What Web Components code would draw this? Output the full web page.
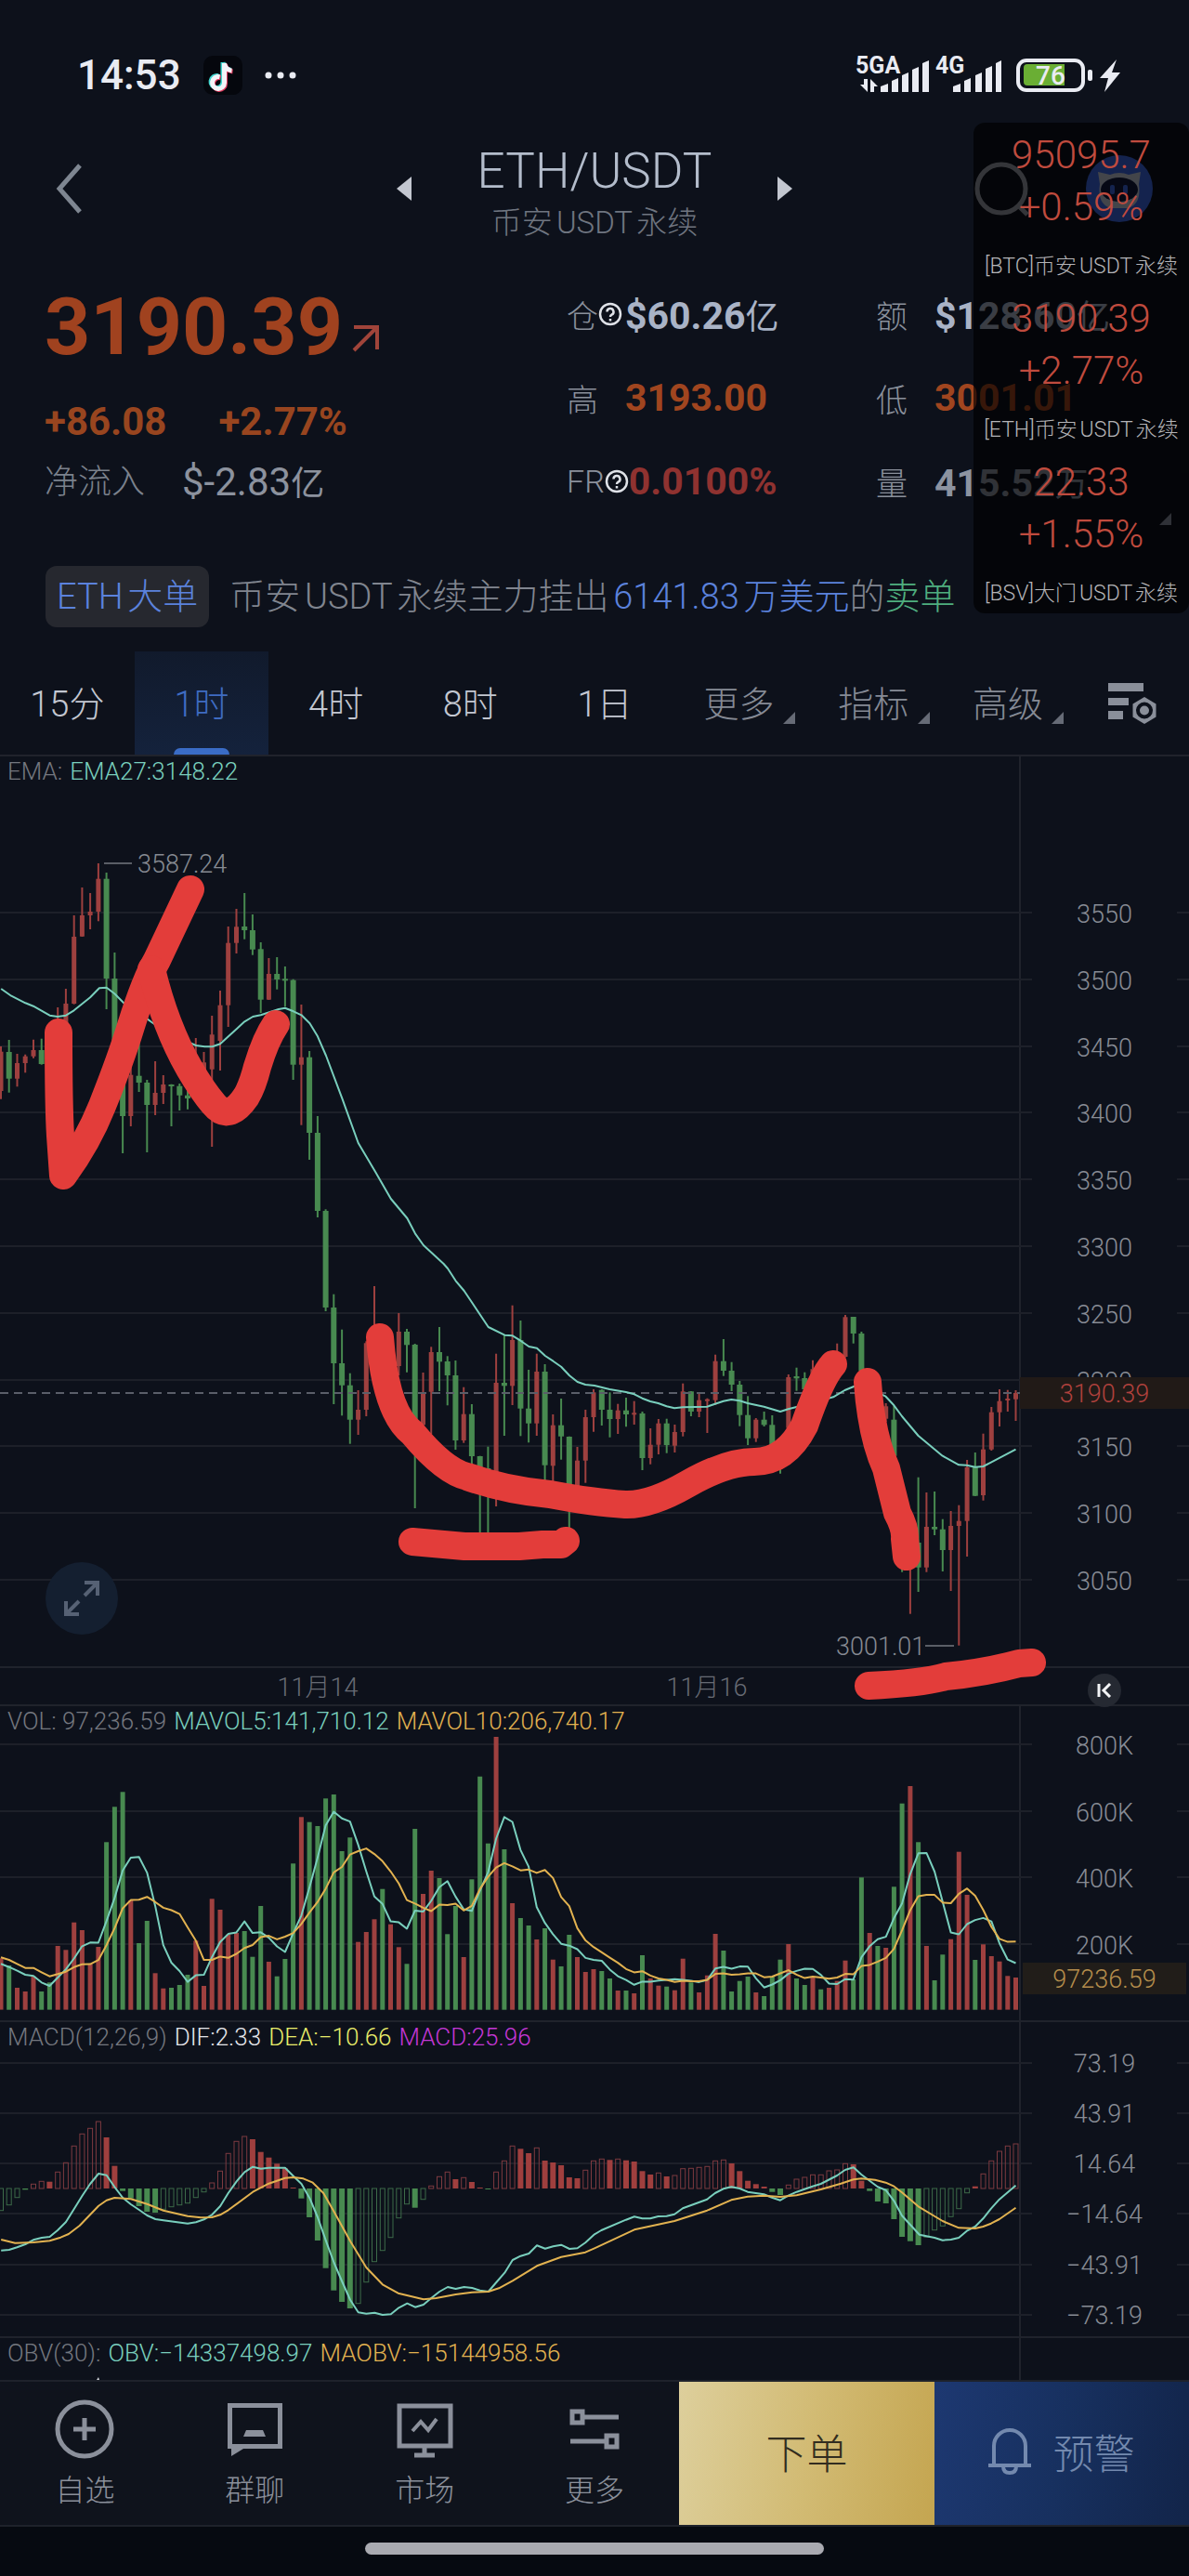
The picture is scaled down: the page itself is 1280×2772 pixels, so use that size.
<!DOCTYPE html>
<html lang="zh-CN">
<head>
<meta charset="utf-8">
<meta name="viewport" content="width=device-width, initial-scale=1">
<title>ETH/USDT</title>
<style>
  html { background: #060a11; }
  body { margin: 0; background: #0d111b; color: #a7adba; font-family: Roboto, "Noto Sans CJK SC", sans-serif; text-autospace: normal; }
</style>
</head>
<body>
<trade-page></trade-page>
<script>
const BASE = `
  *, *::before, *::after { box-sizing: border-box; }
  :host { display: block; }
  svg { display: block; }
  button { font: inherit; color: inherit; background: none; border: 0; padding: 0; margin: 0; cursor: pointer; text-autospace: inherit; }
  a { color: inherit; text-decoration: none; }
`;
function define(name, css, html) {
  customElements.define(name, class extends HTMLElement {
    constructor() {
      super();
      const t = document.createElement('template');
      t.innerHTML = `<style>${BASE}${css}</style>${typeof html === 'function' ? html(this) : html}`;
      this.attachShadow({ mode: 'open' }).append(t.content.cloneNode(true));
    }
  });
}

/* ---------- status bar ---------- */
define('status-bar', `
  :host { display: flex; align-items: center; justify-content: space-between; padding: 56px 72px 26px 83px; color: #e9ebf2; }
  .left { display: flex; align-items: center; gap: 24px; height: 50px; }
  time { font-size: 44px; line-height: 50px; font-weight: 500; }
  .right { overflow: visible; }
  text { font-family: Roboto, sans-serif; fill: #e9ebf2; }
`, `
  <div class="left">
    <time>14:53</time>
    <svg width="42" height="42" viewBox="0 0 42 42" aria-hidden="true">
      <rect width="42" height="42" rx="10" fill="#05070d"/>
      <g fill="none" stroke-width="5">
        <path stroke="#3fd6cf" d="M21 7v21a6.500 6.500 0 1 1-5-6.300M21 7c.6 5 3.500 7.500 8 8"/>
        <path stroke="#e23a5e" d="M23.500 9v21a6.500 6.500 0 1 1-5-6.300M23.500 9c.6 5 3.500 7.500 8 8"/>
        <path stroke="#f3f4f8" d="M22.500 8v21a6.500 6.500 0 1 1-5-6.300M22.500 8c.6 5 3.500 7.500 8 8"/>
      </g>
    </svg>
    <svg width="34" height="8" viewBox="0 0 34 8" fill="#e9ebf2"><circle cx="4" cy="4" r="3.500"/><circle cx="17" cy="4" r="3.500"/><circle cx="30" cy="4" r="3.500"/></svg>
  </div>
  <svg class="right" width="288" height="50" viewBox="920 56 288 50" aria-hidden="true">
    <text x="921" y="79" font-size="25" font-weight="700">5GA</text>
    <text x="1007" y="79" font-size="25" font-weight="700">4G</text>
    <g fill="#e9ebf2">
      <path d="M930 85h4v14l-8-8h4zM937 99V85l8 8h-4v6z"/>
      <path d="M948 93l8-3v9h-8zM960 87l7-3v15h-7zM971 81l7-3v21h-7zM982 75l7-3v27h-7zM993 68l7-3v34h-7z"/>
      <path d="M1026 93l8-3v9h-8zM1038 87l7-3v15h-7zM1050 81l7-3v21h-7zM1061 74l7-3v28h-7zM1072 68l6-3v34h-6z"/>
      <rect x="1171" y="75" width="5" height="12" rx="2"/>
      <path d="M1202 64l-18 20h9l-4 15 17-21h-9z"/>
    </g>
    <rect x="1096" y="65" width="70" height="32" rx="9" fill="none" stroke="#e9ebf2" stroke-width="4"/>
    <path d="M1106 69h40v23h-40q-4 0-4-4v-15q0-4 4-4z" fill="#6aae34"/>
    <text x="1115" y="91" font-size="28" font-weight="500">76</text>
  </svg>
`);

/* ---------- pair title ---------- */
define('pair-header', `
  header { display: grid; grid-template-columns: 1fr auto 1fr; align-items: center; height: 142px; padding: 0 39px 0 59px; }
  .mid { display: flex; align-items: center; gap: 71px; margin-left: -20px; }
  .title { padding-top: 10px; text-align: center; min-width: 250px; }
  h1 { margin: 0 0 4px; font-size: 53px; line-height: 60px; font-weight: 300; color: #b3bccb; }
  p { margin: 0 -20px; font-size: 33px; line-height: 44px; font-weight: 300; color: #6f7580; white-space: nowrap; }
  .side { display: flex; }
  .side.end { justify-content: flex-end; gap: 61px; align-items: center; }
`, `
  <header>
    <div class="side"><button aria-label="返回"><svg width="30" height="54" viewBox="0 0 30 54" fill="none" stroke="#7e8691" stroke-width="5"><path d="M27 2 5 27l22 25"/></svg></button></div>
    <div class="mid">
      <button aria-label="上一个"><svg width="16" height="26" viewBox="0 0 16 26" fill="#c3c7d0"><path d="M16 0v26L0 13z"/></svg></button>
      <div class="title"><h1>ETH/USDT</h1><p>币安USDT永续</p></div>
      <button aria-label="下一个"><svg width="16" height="26" viewBox="0 0 16 26" fill="#c3c7d0"><path d="M0 0v26l16-13z"/></svg></button>
    </div>
    <div class="side end">
      <button aria-label="搜索"><svg width="60" height="62" viewBox="0 0 60 62" fill="none" stroke="#9a9da8" stroke-width="5"><circle cx="30" cy="31" r="26"/><path d="M49 50l9 9"/></svg></button>
      <button aria-label="助手"><svg width="72" height="72" viewBox="0 0 72 72"><circle cx="36" cy="36" r="36" fill="#3d68e4"/><path d="M13 18l13 3q10-4 20 0l13-3-2 13q3 22-12 26H27Q12 53 15 31z" fill="#c3c9da"/><ellipse cx="36" cy="37" rx="20" ry="13" fill="#121a3c"/><rect x="26" y="32" width="5" height="10" rx="2" fill="#3d68e4"/><rect x="40" y="32" width="5" height="10" rx="2" fill="#3d68e4"/></svg></button>
    </div>
  </header>
`);

/* ---------- statistics ---------- */
const HELP = `<svg width="26" height="26" viewBox="0 0 26 26" fill="none" stroke="#dfe2e8" stroke-width="2.500"><circle cx="13" cy="13" r="11"/><path d="M9.500 10.500a3.500 3.500 0 1 1 5 3.200q-1.500.8-1.500 2.300"/><path d="M13 18v2.500"/></svg>`;
define('stat-item', `
  :host { display: flex; align-items: center; height: 90px; white-space: nowrap; text-autospace: no-autospace; }
  .label { display: flex; align-items: center; flex: 0 0 63px; font-size: 34px; font-weight: 300; color: #8a909b; }
  .value { font-size: 41px; font-weight: 700; color: var(--tone, #a9b3c6); }
`, `<span class="label"><slot name="label"></slot></span><span class="value"><slot></slot></span>`);

define('market-stats', `
  section { display: grid; grid-template-columns: 562fr 333fr 337fr; padding: 19px 0 2px 48px; text-autospace: no-autospace; }
  .left { padding-top: 9px; white-space: nowrap; }
  .price { display: flex; align-items: center; gap: 10px; height: 100px; font-size: 86px; line-height: 100px; font-weight: 700; color: #a0421f; }
  .price svg { margin-top: 24px; }
  .change { display: flex; gap: 56px; margin: 22px 0 5px; font-size: 42px; line-height: 60px; font-weight: 700; color: #98451f; }
  .flow { display: flex; gap: 40px; font-size: 36px; line-height: 60px; font-weight: 300; color: #7b818c; }
  .flow b { font-size: 42px; color: #8c929e; }
  .cjk { font-size: 36px; font-weight: 400; }
  .up { --tone: #a0451f; } .rate { --tone: #8f3230; } .qty { --tone: #8c93a0; }
`, `
  <section>
    <div class="left">
      <div class="price">3190.39<svg width="30" height="30" viewBox="0 0 30 30" fill="none" stroke="#a0443a" stroke-width="4"><path d="M2 28 27 3M2 3h25v24"/></svg></div>
      <div class="change"><span>+86.08</span><span>+2.77%</span></div>
      <div class="flow"><span>净流入</span><b>$-2.83<span class="cjk">亿</span></b></div>
    </div>
    <div>
      <stat-item><span slot="label">仓</span><span slot="label">${HELP}</span>$60.26<span class="cjk">亿</span></stat-item>
      <stat-item class="up"><span slot="label">高</span>3193.00</stat-item>
      <stat-item class="rate"><span slot="label">FR</span><span slot="label">${HELP}</span>0.0100%</stat-item>
    </div>
    <div>
      <stat-item><span slot="label">额</span>$128.60<span class="cjk">亿</span></stat-item>
      <stat-item class="up"><span slot="label">低</span>3001.01</stat-item>
      <stat-item class="qty"><span slot="label">量</span>415.52<span class="cjk">万</span></stat-item>
    </div>
  </section>
`);

/* ---------- large order notice ---------- */
define('order-notice', `
  a { display: flex; align-items: center; gap: 22px; padding: 44px 0 26px 49px; font-size: 38px; font-weight: 300; line-height: 66px; white-space: nowrap; color: #80858f; }
  .chip { padding: 0 12px; border-radius: 12px; background: #26282f; color: #5b82dc; }
  .amt { color: #5b82dc; } .sell { color: #4fae7f; }
`, `<a href="#order"><span class="chip">ETH大单</span><span>币安USDT永续主力挂出<span class="amt">6141.83万美元</span>的<span class="sell">卖单</span></span></a>`);

/* ---------- period tabs ---------- */
const MORE = `<svg class="corner" width="13" height="13" viewBox="0 0 13 13"><path d="M13 0v13H0z" fill="#666b76"/></svg>`;
define('period-tabs', `
  nav { display: flex; height: 111px; font-size: 38px; font-weight: 300; color: #c3c7d1; text-autospace: no-autospace; }
  nav button { position: relative; flex: 145 1 0; height: 100%; padding-bottom: 4px; }
  nav button.dim { color: #858a95; }
  nav button.last { flex-grow: 120; display: flex; align-items: center; justify-content: center; padding: 3px 0 0 3px; }
  nav button[aria-pressed=true] { color: #3f6cc2; background: linear-gradient(#111a2c, #14223c); }
  nav button[aria-pressed=true]::after { content: ""; position: absolute; left: 50%; bottom: 0; width: 60px; height: 7px; margin-left: -30px; border-radius: 7px 7px 0 0; background: #3a6cc6; }
  .corner { position: absolute; right: 12px; bottom: 33px; }
`, `
  <nav>
    <button>15分</button><button aria-pressed="true">1时</button><button>4时</button><button>8时</button><button>1日</button>
    <button class="dim">更多${MORE}</button><button class="dim">指标${MORE}</button><button class="dim">高级${MORE}</button>
    <button class="last" aria-label="设置"><svg width="54" height="46" viewBox="0 0 54 46"><g fill="#8a8f9a"><path d="M0 0h38v9H0zM0 16h22v8H0zM0 30h16v9H0z"/></g><path d="M39 15l12.500 7.500v14L39 44l-12.500-7.500v-14z" fill="#8a8f9a"/><circle cx="39" cy="29.500" r="7" fill="#8a8f9a" stroke="#0d111b" stroke-width="4"/></svg></button>
  </nav>
`);

/* ---------- chart data ---------- */
const STEP = 8.74, X0 = 1, ZOOM = 2.45;
const cx = i => X0 + i * STEP;
const RED = '#9e403f', GREEN = '#488a50', TEAL = '#79cfbd', GOLD = '#e2b250', GRID = '#1d2029';
/* high, body top, body bottom, low: thirds of a unit below the 880 level */
const EARLY = [738,755,882,908, 717,756,842,887, 762,792,842,868, 764,770,792,823, 716,750,770,776, 713,750,795,797, 690,720,795,830,
 612,660,740,780, 552,600,680,720, 315,384,600,602, 225,315,383,384, 243,303,315,360, 147,197,303,334, 177,197,519,618, 435,519,730,800,
 700,730,963,1083, 800,830,963,996, 720,833,855,885, 846,855,927,1080, 786,888,927,960, 831,861,888,924, 860,861,866,996, 858,866,896,945,
 870,896,906,941, 711,800,860,900, 756,790,850,900, 639,700,812,1062, 558,605,720,816, 351,404,605,675, 294,352,404,438, 243,351,363,392,
 312,363,425,443, 402,424,587,630, 453,504,587,588, 450,504,522,554, 480,520,525,610, 521,524,797,846, 603,773,797,992, 753,773,1017,1104,
 963,1017,1269,1290, 1264,1269,1581,1593];
/* the same, below the 1360 level */
const LATE = [98,141,321,453, 212,321,392,490, 353,392,503,581, 408,471,503,552, 250,256,471,492, 72,200,256,300, 220,230,290,300, 230,260,300,320,
 159,219,330,360, 210,219,262,350, 258,261,520,789, 351,415,520,560, 268,285,413,550, 204,285,316,411, 298,315,360,457, 312,360,570,600,
 398,485,570,578, 453,485,621,650, 620,621,700,880, 590,660,700,880, 290,384,690,783, 230,384,394,555, 134,246,394,456, 183,246,467,556,
 342,467,515,577, 290,348,515,555, 324,348,650,710, 486,521,652,720, 435,521,557,632, 557,558,720,870, 591,635,720,740, 471,495,635,707,
 405,415,495,542, 405,407,471,522, 415,471,501,560, 452,473,501,549, 432,473,486,526, 443,481,486,519, 477,483,627,666, 531,584,627,647,
 501,515,584,615, 500,515,585,611, 519,543,587,609, 386,412,543,557, 411,412,477,492, 420,440,477,495, 434,437,443,546, 293,314,440,455,
 243,314,345,362, 317,345,390,411, 378,390,488,524, 427,488,563,585, 498,503,563,575, 477,503,520,525, 489,520,590,620, 600,610,650,677,
 357,366,530,620, 335,363,370,410, 350,369,405,415, 311,340,405,450, 380,400,420,440, 300,310,340,350, 257,290,320,330, 165,172,300,302,
 171,171,225,257, 219,225,345,350, 345,350,420,430, 420,430,440,450, 450,460,500,510, 459,503,620,650, 700,750,950,995, 900,930,960,1130,
 689,900,980,1059, 738,849,980,995, 735,849,857,876, 824,857,924,993, 798,846,924,1056, 779,830,846,1232, 633,657,830,945, 609,654,749,750,
 548,599,747,764, 462,479,599,603, 405,443,479,525, 407,435,440,477, 408,417,437,507];
/* top of each volume bar, the base being 1028 */
const VOL = [862,885,957,969,920,969,940,822,835,746,771,880,825,487,373,325,675,813,741,910,959,957,948,915,805,951,670,705,785,780,774,857,693,
 873,920,864,556,406,422,435,346,333,516,472,809,777,736,638,752,826,880,444,654,579,603,784,693,858,607,275,491,147,510,684,732,756,801,765,
 866,888,786,858,906,897,903,927,966,966,975,852,927,950,953,965,863,940,972,917,783,837,969,935,921,972,984,921,866,816,927,948,923,962,957,
 935,869,930,601,780,822,828,631,362,306,487,822,933,850,800,518,657,867,817,855,872,919,924];
/* the hours that closed lower */
const DOWN = new Set([1,5,6,13,14,15,17,18,21,22,23,30,31,32,34,35,36,38,39,40,41,42,43,47,50,51,54,55,56,58,59,60,62,64,65,67,69,70,74,75,77,79,82,85,
 89,90,91,92,94,95,96,98,99,101,105,106,108,110,111,113,115,116,120]);
/* MACD bars: negative is below the zero line at 555; f is filled, h is hollow */
const HIST = ('-626h -608h -584h -559f 541h 532h 533f 502h 472h 418h 379h 361h 339h 390f 482f -563f -587f -612f -630f -633f -622h -614h -608h -602h -584h -566h ' +
 '537h 499h 442h 403h 387h 396f 437f 455f 475f 490f 552f -587f -648f -723f -812f -884f -921f -942f -926h -857h -791h -755h -713h -650h -605h -617f -590h ' +
 '547h 517h 502h 525f 520h 534f 552f -557f 502h 466h 418h 427f 441f 424h 465f 471f 480f 519f 522f 496h 466h 460h 463f 460h 464f 468f 499f 510f 505h 516f ' +
 '513h 491h 490h 487h 484h 466h 463h 474f 499f 530f 541f 549f -566f -576f 544h 525h 519h 511h 511h 498h 495h 475h 477f 530f -563f -597f -603f -654f -711f ' +
 '-725f -738f -712h -689h -676h -646h -620h -569h 548f 508h 466h 435h 418h 411h').split(' ');
const EMA_A = '3,552 30,575 67,598 88,608 131,638 152,642 174,638 195,622 238,580 262,550 281,548 302,568 330,602 367,630 400,660 431,685 470,710 517,735 540,739 560,739 581,730 624,682 645,658 667,642 688,637 720,624 735,618 752,614 774,625 795,637 817,664 838,706 860,768 902,905 945,1050 990,1143 1031,1230 1074,1293 1095,1342 1117,1380 1170,1440 1181,1455 1202,1495 1224,1527 1245,1565 1288,1644 1331,1670 1352,1672 1373,1688 1395,1707 1416,1712 1438,1737 1459,1754 1480,1772 1502,1801 1523,1821 1544,1830 1568,1833';
const EMA_B = '40,1845 83,1854 105,1861 126,1874 147,1884 168,1890 190,1900 211,1906 233,1903 297,1901 340,1883 361,1878 383,1882 404,1890 447,1901 490,1917 511,1909 540,1900 630,1870 660,1848 690,1833 720,1840 768,1868 790,1897 811,1932 854,1995 918,2060 961,2089 982,2090 1004,2096 1025,2094 1046,2081 1111,2039';
const DIF_A = '3,755 24,753 45,745 67,735 88,721 110,714 131,711 152,690 174,663 195,622 217,578 238,540 260,507 281,512 302,550 324,585 345,606 367,624 388,642 410,654 431,658 495,668 517,664 538,655 559,640 581,612 602,570 624,532 645,502 667,485 688,491 709,488 752,488 774,515 795,540 817,587 838,648 860,725 881,795 902,855 924,915 945,955 966,959 988,956 1009,963 1031,961 1052,940 1074,926 1095,938 1117,930 1138,908 1159,888 1181,873 1202,879 1224,873 1245,876 1266,884 1288,888 1309,858 1331,827 1352,786 1373,773 1395,765 1416,739 1438,749 1459,742 1480,737 1502,750 1523,748 1544,730 1568,703';
const DIF_B = '18,690 83,656 105,646 126,652 147,652 168,645 190,644 211,638 233,619 297,590 318,570 340,556 361,550 383,555 404,566 447,574 468,584 490,593 511,578 533,566 575,548 597,540 640,513 661,495 683,487 704,510 747,550 768,560 790,595 811,643 857,704 897,714 918,722 940,720 961,714 982,692 1004,678 1025,652 1046,620 1068,590 1111,545';
const DEA_A = '3,720 40,731 88,729 131,724 160,713 181,702 210,675 260,611 281,593 302,585 345,589 388,605 431,626 495,644 530,649 559,648 581,640 602,625 667,566 709,539 752,521 774,519 800,523 825,536 853,570 881,630 924,725 966,810 1009,865 1050,893 1117,913 1150,909 1202,897 1245,890 1288,888 1316,877 1352,853 1416,805 1480,776 1544,761 1568,748';
const DEA_B = '105,688 211,660 297,626 361,592 404,581 447,578 490,582 533,577 597,558 650,539 683,526 704,523 740,527 768,536 790,548 811,568 854,613 918,660 961,682 1004,684 1025,678 1046,668 1068,654 1111,617';

const r1 = n => Math.round(n * 10) / 10;
const pts = (a, b, top) => {
  const conv = (s, off) => s.split(' ').map(p => { const [x, y] = p.split(',').map(Number); return r1((x + off) / ZOOM) + ',' + r1(top + y / 3); });
  return [...conv(a, 0), ...conv(b, 1568)].join(' ');
};
const line = (points, color) => `<polyline points="${points}" fill="none" stroke="${color}" stroke-width="2" stroke-linejoin="round"/>`;
const rule = y => `<path d="M0 ${y}H1111M1267 ${y}H1280" stroke="${GRID}" stroke-width="2"/>`;
const label = (y, t, fill = '#888c95') => `<text x="1189" y="${y + 10}" text-anchor="middle" fill="${fill}">${t}</text>`;
const frame = (top, h, body) => `<svg viewBox="0 ${top} 1280 ${h}" width="100%">
  <path d="M0 ${top + 1}H1280M1098 ${top}V${top + h}" stroke="#20232c" stroke-width="2" fill="none"/>${body}</svg>`;
const PANE = `
  :host { display: grid; position: relative; text-autospace: no-autospace; }
  :host > * { grid-area: 1 / 1; }
  svg text { font-family: Roboto, "Noto Sans CJK SC", sans-serif; font-size: 27px; font-weight: 300; }
  .legend { z-index: 1; margin: 0; padding-left: 8px; display: flex; gap: 8px; font-size: 26px; line-height: 36px; font-weight: 300; color: #74777f; white-space: nowrap; align-self: start; }
  .teal { color: #79cfbd; } .gold { color: #e2b250; } .white { color: #e4e5ea; } .yellow { color: #e8ec6a; } .mag { color: #c437d6; }
`;

function candles() {
  let s = '';
  for (let i = 0; i < 126; i++) {
    const src = i < 41 ? EARLY : LATE, k = (i < 41 ? i : i - 41) * 4, top = i < 41 ? 880 : 1360;
    const [h, o, c, l] = src.slice(k, k + 4).map(v => r1(top + v / 3));
    const down = DOWN.has(i), w = down ? 6 : 5, x = cx(i);
    s += `<path d="M${r1(x)} ${h}V${l}" stroke-width="2" stroke="${down ? GREEN : RED}"/><rect x="${r1(x - w / 2)}" y="${o}" width="${w}" height="${Math.max(2, r1(c - o))}" fill="${down ? GREEN : RED}"/>`;
  }
  return s;
}
define('price-pane', PANE + `
  .expand, .latest { position: absolute; z-index: 2; border-radius: 50%; display: grid; place-items: center; }
  .expand { left: 49px; bottom: 75px; width: 78px; height: 78px; background: #141f30; }
  .latest { right: 73px; bottom: -3px; width: 36px; height: 36px; background: #252932; }
`, () => `<p class="legend"><span>EMA:</span><span class="teal">EMA27:3148.22</span></p>` + frame(812, 1022,
  [3550,3500,3450,3400,3350,3300,3250,3200,3150,3100,3050].map((p, i) => { const y = Math.round(982 + i * 71.8); return rule(y) + label(y + 1, p); }).join('') +
  `<path d="M0 1794H1280" stroke="#20232c" stroke-width="2"/><rect x="1096" y="1796" width="4" height="40" fill="#0d111b"/>` +
  candles() +
  `<path d="M0 1499H1098" stroke="#5a5e69" stroke-width="2" stroke-dasharray="9 6"/>` +
  line(pts(EMA_A, EMA_B, 880), TEAL) +
  `<path d="M112 929H142M996 1771H1027" stroke="#5a5e66" stroke-width="2"/>
   <text x="148" y="939" fill="#868a92">3587.24</text><text x="900" y="1781" fill="#868a92">3001.01</text>
   <text x="342" y="1825" text-anchor="middle" fill="#676b74">11月14</text><text x="761" y="1825" text-anchor="middle" fill="#676b74">11月16</text>
   <rect x="1098" y="1482" width="182" height="34" fill="#211a17"/>${label(1499, '3190.39', '#b0413d')}
   <g fill="none" stroke="#e33d3a" stroke-width="30" stroke-linecap="round" stroke-linejoin="round">
     <path d="M63 1111Q63 1190 65 1222L68 1265Q94 1230 110 1190Q130 1140 141 1104Q156 1056 169 1033L205 957"/>
     <path d="M163 1043Q178 1105 204 1150Q218 1174 230 1188Q246 1208 265 1180Q272 1168 277 1148Q286 1118 297 1102"/>
     <path d="M409 1439Q415 1520 444 1542Q478 1583 503 1589Q545 1604 592 1608Q640 1617 673 1619Q700 1620 740 1597Q782 1573 812 1573Q846 1573 866 1534Q884 1482 897 1468"/>
     <path d="M934 1487Q938 1545 954 1580L966 1628Q975 1645 974 1656L976 1675"/>
     <path d="M444 1659L500 1664H559L584 1662H604L609 1658"/>
     <path d="M935 1814Q995 1811 1018 1804Q1060 1800 1097 1790L1111 1789"/>
   </g>`) +
  `<button class="expand" aria-label="全屏"><svg width="40" height="40" viewBox="0 0 40 40" fill="none" stroke="#566174" stroke-width="4"><path d="M23 17 37 3M23 3h14v14M17 23 3 37M3 23v14h14"/></svg></button>
   <button class="latest" aria-label="最新"><svg width="16" height="16" viewBox="0 0 16 16" fill="none" stroke="#f2f3f5" stroke-width="3"><path d="M2 1v14M14 1 7 8l7 7"/></svg></button>`);

function average(n, seed) {
  return VOL.map((_, i) => {
    const y = i < seed.length ? seed[i] : VOL.slice(i - n + 1, i + 1).reduce((a, b) => a + b, 0) / n;
    return r1(cx(i)) + ',' + r1(1820 + y / 3);
  }).join(' ');
}
define('volume-pane', PANE, () => `<p class="legend"><span>VOL: 97,236.59</span><span class="teal">MAVOL5:141,710.12</span><span class="gold">MAVOL10:206,740.17</span></p>` +
  frame(1834, 340,
  [['800K', 1877], ['600K', 1949], ['400K', 2020], ['200K', 2092]].map(([t, y]) => rule(y) + label(y + 1, t)).join('') +
  VOL.map((v, i) => `<rect x="${r1(cx(i) - 2.5)}" y="${r1(1820 + v / 3)}" width="5" height="${r1((1028 - v) / 3)}" fill="${DOWN.has(i) ? GREEN : RED}"/>`).join('') +
  line(average(5, [880, 890, 902, 915]), TEAL) + line(average(10, [859, 867, 880, 893, 893, 907, 920, 913, 905]), GOLD) +
  `<rect x="1101" y="2112" width="176" height="34" fill="#211d19"/>${label(2129, '97236.59', '#b58d4c')}`));

define('macd-pane', PANE, () => `<p class="legend"><span>MACD(12,26,9)</span><span class="white">DIF:2.33</span><span class="yellow">DEA:−10.66</span><span class="mag">MACD:25.96</span></p>` +
  frame(2174, 340,
  [['73.19', 2220], ['43.91', 2274], ['14.64', 2328], ['−14.64', 2382], ['−43.91', 2437], ['−73.19', 2491]].map(([t, y]) => rule(y) + label(y, t)).join('') +
  HIST.map((s, i) => {
    const v = parseInt(s), neg = v < 0, full = s.endsWith('f'), h = Math.max(1, Math.abs(Math.abs(v) - 555) / 3), y = neg ? 2355 : 2355 - h, c = neg ? GREEN : '#9f3f3e';
    return full ? `<rect x="${r1(cx(i) - 3)}" y="${r1(y)}" width="6" height="${r1(h)}" fill="${c}"/>`
      : `<rect x="${r1(cx(i) - 2.5)}" y="${r1(y)}" width="5" height="${r1(h)}" fill="none" stroke="${neg ? '#3d6b49' : '#7d3a40'}"/>`;
  }).join('') +
  line(pts(DIF_A, DIF_B, 2170), TEAL) + line(pts(DEA_A, DEA_B, 2170), GOLD)));

define('obv-pane', PANE, () => `<p class="legend"><span>OBV(30):</span><span class="teal">OBV:−14337498.97</span><span class="gold">MAOBV:−15144958.56</span></p>` +
  frame(2514, 47, `<path d="M104 2561l2-3 1 3z" fill="#cfd2d8"/>`));

/* ---------- bottom bar ---------- */
define('nav-item', `
  :host { display: block; flex: 2 1 0; }
  button { width: 100%; height: 100%; display: flex; flex-direction: column; align-items: center; justify-content: center; gap: 14px; padding-top: 2px; font-size: 32px; line-height: 40px; font-weight: 300; color: #8b909b; }
`, `<button><slot name="icon"></slot><slot></slot></button>`);
define('trade-bar', `
  nav { display: flex; height: 158px; border-top: 2px solid #1e222b; border-bottom: 2px solid #1e222b; background: #0f131c; }
  .order, .alert { flex: 3 1 0; padding-bottom: 4px; font-size: 44px; font-weight: 300; }
  .order { color: #322d20; background: linear-gradient(100deg, #ddcf9c, #d2bb74 50%, #c4a550); }
  .alert { display: flex; align-items: center; justify-content: center; gap: 24px; color: #7389ae; background: linear-gradient(100deg, #1d3871, #17305f 50%, #122449); }
  .home { display: flex; justify-content: center; height: 53px; padding-top: 17px; background: #060a11; }
  .home i { width: 494px; height: 13px; border-radius: 7px; background: #a9aab1; }
`, `
  <nav>
    <nav-item><svg slot="icon" width="64" height="64" viewBox="0 0 64 64" fill="none" stroke="#8b909b"><circle cx="32" cy="32" r="29" stroke-width="5"/><path d="M32 20v24M20 32h24" stroke-width="5"/></svg>自选</nav-item>
    <nav-item><svg slot="icon" width="64" height="64" viewBox="0 0 64 64"><path d="M3 4h59v49H20L7 61V53H3z" fill="#8b909b"/><path d="M8 9h49v39H8z" fill="#0f131c"/><path d="M23 33h18l3 7H20z" fill="#8b909b"/></svg>群聊</nav-item>
    <nav-item><svg slot="icon" width="64" height="64" viewBox="0 0 64 64" fill="none" stroke="#8b909b" stroke-width="5"><path d="M5 7h55v43H5z"/><path d="M32 50v9M21 60h22"/><path d="M19 34l9-10 8 9 9-12" stroke-width="4"/></svg>市场</nav-item>
    <nav-item><svg slot="icon" width="64" height="64" viewBox="0 0 64 64" fill="none" stroke="#8b909b" stroke-width="5"><path d="M8 13h11v12H8zM19 19h39M45 39h11v12H45zM45 45H6"/></svg>更多</nav-item>
    <button class="order">下单</button>
    <button class="alert"><svg width="46" height="50" viewBox="0 0 46 50" fill="none" stroke="#7389ae" stroke-width="4"><path d="M6 39V19a17 17 0 0 1 34 0v20M0 40h46M16 41q0 7 7 7t7-7"/></svg>预警</button>
  </nav>
  <div class="home"><i></i></div>
`);

/* ---------- floating quotes ---------- */
define('quote-card', `
  :host { text-align: center; font-weight: 300; white-space: nowrap; }
  div { font-size: 42px; line-height: 56px; color: #c04b3e; }
  p { margin: 0; padding-top: 16px; font-size: 23px; line-height: 40px; color: #b4b4b7; }
`, `<div><slot name="price"></slot></div><div><slot name="change"></slot></div><p><slot></slot></p>`);
define('quote-float', `
  :host { display: flex; flex-direction: column; gap: 8px; padding: 7px 0 1px; border-radius: 12px; background: rgba(0, 0, 0, .66); }
`, `
  <quote-card><span slot="price">95095.7</span><span slot="change">+0.59%</span>[BTC]币安USDT永续</quote-card>
  <quote-card><span slot="price">3190.39</span><span slot="change">+2.77%</span>[ETH]币安USDT永续</quote-card>
  <quote-card><span slot="price">22.33</span><span slot="change">+1.55%</span>[BSV]大门USDT永续</quote-card>
`);

define('trade-page', `
  :host { position: relative; }
  quote-float, .fold { position: absolute; right: 0; z-index: 3; }
  quote-float { top: 132px; width: 232px; }
  .fold { top: 552px; right: 19px; }
  price-pane { z-index: 2; }
`, `
  <status-bar></status-bar>
  <pair-header></pair-header>
  <market-stats></market-stats>
  <order-notice></order-notice>
  <period-tabs></period-tabs>
  <price-pane></price-pane>
  <volume-pane></volume-pane>
  <macd-pane></macd-pane>
  <obv-pane></obv-pane>
  <trade-bar></trade-bar>
  <quote-float></quote-float>
  <svg class="fold" width="13" height="13" viewBox="0 0 13 13" aria-hidden="true"><path d="M13 0v13H0z" fill="#2f3137"/></svg>
`);
</script>
</body>
</html>
